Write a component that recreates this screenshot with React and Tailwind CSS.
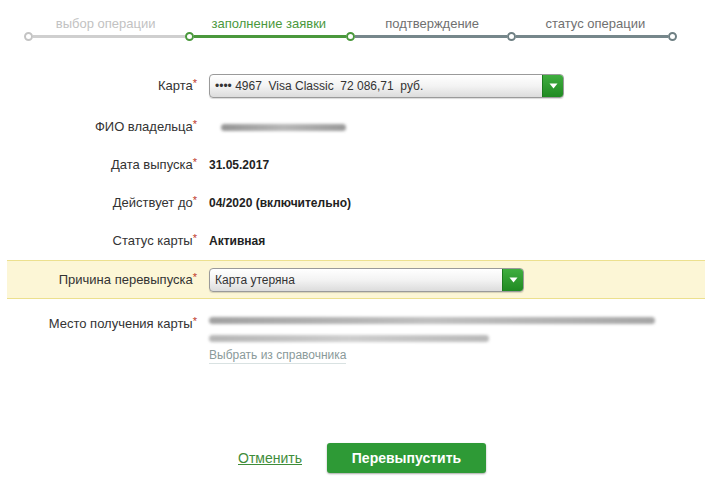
import React from "react";

const steps = [
  { label: "выбор операции", color: "text-[#c2c2c2]" },
  { label: "заполнение заявки", color: "text-[#4a983c]" },
  { label: "подтверждение", color: "text-[#707070]" },
  { label: "статус операции", color: "text-[#707070]" },
];

function Dot({ tone }) {
  const border =
    tone === "green" ? "border-[#4a983c]" : tone === "light" ? "border-[#c4c4c4]" : "border-[#6f8084]";
  return <div className={`w-[9px] h-[9px] rounded-full bg-white border-2 ${border} shrink-0`} />;
}

function Stepper() {
  return (
    <div className="pt-[16px] pl-[24px] w-[677px]">
      <div className="grid grid-cols-4 text-[13px] leading-[16px]">
        {steps.map((s) => (
          <div key={s.label} className={`text-center ${s.color}`}>
            {s.label}
          </div>
        ))}
      </div>
      <div className="flex items-center">
        <Dot tone="light" />
        <div className="flex-1 h-[3px] bg-[#cfcfcf]" />
        <Dot tone="green" />
        <div className="flex-1 h-[3px] bg-[#4a983c]" />
        <Dot tone="green" />
        <div className="flex-1 h-[3px] bg-[#76878b]" />
        <Dot tone="dark" />
        <div className="flex-1 h-[3px] bg-[#76878b]" />
        <Dot tone="dark" />
      </div>
    </div>
  );
}

function Label({ children }) {
  return (
    <div className="w-[197px] shrink-0 text-right text-[13px] text-[#333]">
      {children}
      <span className="text-[#c0392b] relative top-[-3px] text-[11px]">*</span>
    </div>
  );
}

function Select({ value, width }) {
  return (
    <div
      className={`${width} h-[24px] flex items-stretch rounded-[4px] border border-[#9a9a9a] bg-gradient-to-b from-white via-[#f3f3f3] to-[#dcdcdc] shadow-[0_1px_1px_rgba(0,0,0,0.15)]`}
    >
      <div className="flex-1 flex items-center pl-[5px] text-[12px] text-[#333] whitespace-pre">{value}</div>
      <div className="w-[21px] flex items-center justify-center rounded-r-[3px] bg-gradient-to-b from-[#3fae3f] to-[#1f8a22] border-l border-[#1c7a1e]">
        <svg width="9" height="6" viewBox="0 0 9 6">
          <path d="M0.5 0.5 L8.5 0.5 L4.5 5.5 Z" fill="#fff" />
        </svg>
      </div>
    </div>
  );
}

function Blur({ className }) {
  return (
    <div
      className={`h-[7px] rounded-sm bg-gradient-to-r from-[#7a7a7a] via-[#a5a5a5] to-[#808080] blur-[1.5px] ${className}`}
    />
  );
}

export default function App() {
  return (
    <div className="w-[712px] h-[489px] bg-white font-['Liberation_Sans',Arial,sans-serif] overflow-hidden">
      <Stepper />

      <div className="mt-[26px]">
        <div className="flex items-center gap-[12px] h-[38px]">
          <Label>Карта</Label>
          <Select width="w-[355px]" value="•••• 4967  Visa Classic  72 086,71  руб." />
        </div>
        <div className="flex items-center gap-[12px] h-[41px] pt-[3px]">
          <Label>ФИО владельца</Label>
          <Blur className="w-[125px] ml-[12px] opacity-80" />
        </div>
        <div className="flex items-center gap-[12px] h-[38px]">
          <Label>Дата выпуска</Label>
          <div className="text-[12px] font-bold text-[#222]">31.05.2017</div>
        </div>
        <div className="flex items-center gap-[12px] h-[38px]">
          <Label>Действует до</Label>
          <div className="text-[12px] font-bold text-[#222]">04/2020 (включительно)</div>
        </div>
        <div className="flex items-center gap-[12px] h-[38px]">
          <Label>Статус карты</Label>
          <div className="text-[12px] font-bold text-[#222]">Активная</div>
        </div>
        <div className="mx-[7px] flex items-center gap-[12px] h-[39px] bg-[#fcf6d6] border-y border-[#ece08e]">
          <div className="-ml-[7px] flex items-center gap-[12px]">
            <Label>Причина перевыпуска</Label>
            <Select width="w-[315px]" value="Карта утеряна" />
          </div>
        </div>
        <div className="flex gap-[12px] pt-[15px]">
          <Label>Место получения карты</Label>
          <div className="pt-[3px] w-[450px]">
            <Blur className="w-[446px] opacity-70" />
            <Blur className="w-[280px] mt-[11px] opacity-55" />
            <div className="mt-[6px] text-[12px] text-[#8a9a9a] inline-block border-b border-[#d9e2e2] leading-[15px]">
              Выбрать из справочника
            </div>
          </div>
        </div>
      </div>

      <div className="flex items-center mt-[77px] pl-[238px] gap-[25px]">
        <a className="text-[14px] text-[#3f8d3a] underline">Отменить</a>
        <button className="w-[159px] h-[30px] rounded-[3px] bg-[#2e9a36] text-white text-[14px] font-bold shadow-[0_1px_2px_rgba(0,0,0,0.35)]">
          Перевыпустить
        </button>
      </div>
    </div>
  );
}
